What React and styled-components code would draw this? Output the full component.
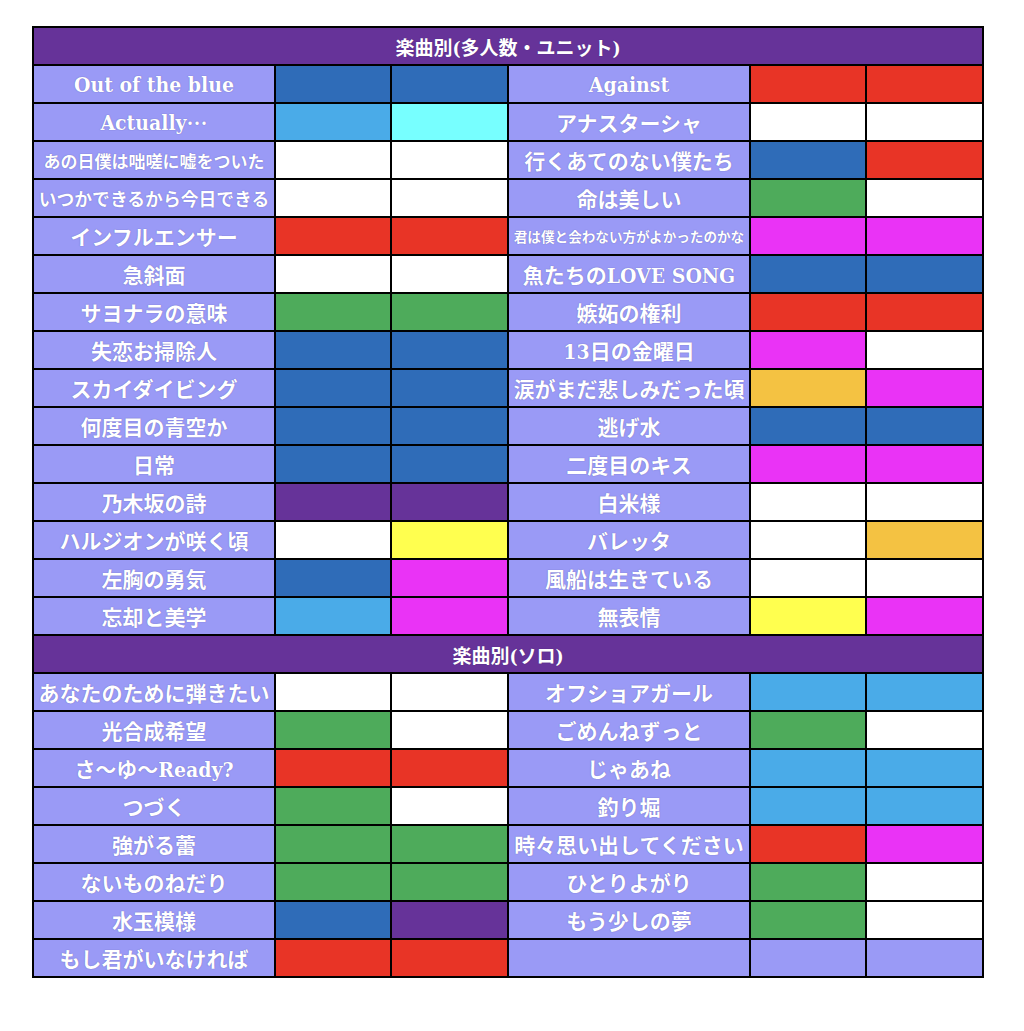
import React from 'react'
import styled, { createGlobalStyle } from 'styled-components'

const GlobalStyle = createGlobalStyle`
  body {
    margin: 0;
    background: #fff;
  }
`

const C = {
  blue: '#2f6cb8',
  sky: '#4aabe8',
  cyan: '#77ffff',
  red: '#e83426',
  green: '#4eab5b',
  pink: '#ea33f6',
  purple: '#663399',
  yellow: '#ffff4f',
  orange: '#f4c242',
  white: '#ffffff',
  lav: '#9a9af6',
}

const Page = styled.div`
  padding: 26px 0 0 32px;
`

const Sheet = styled.div`
  display: grid;
  grid-template-columns: 240px 114px 115px 240px 114px 115px;
  grid-auto-rows: 36px;
  gap: 2px;
  padding: 2px;
  width: max-content;
  background: #000;
  font-family: "DejaVu Serif Condensed", "DejaVu Serif", "Noto Sans CJK JP", serif;
  font-weight: 700;
  color: #fff;
`

const SectionHeader = styled.div`
  grid-column: 1 / -1;
  background: ${C.purple};
  display: flex;
  align-items: center;
  justify-content: center;
  font-size: 19px;
  text-shadow: 0 0 1px rgba(40, 20, 80, 0.6);
`

const NameCell = styled.div`
  background: ${C.lav};
  display: flex;
  align-items: center;
  justify-content: center;
  white-space: nowrap;
  overflow: hidden;
  font-size: ${p => p.$size || 21}px;
  text-shadow: 0 0 1px rgba(60, 60, 140, 0.7);
`

// japanese-style centred dots
const Dots = styled.span`
  font-family: "Noto Sans CJK JP", sans-serif;
`

const ColorCell = styled.div`
  background: ${p => p.$color};
`

const units = [
  [['Out of the blue', 'blue', 'blue'], ['Against', 'red', 'red']],
  [[<>Actually<Dots>…</Dots></>, 'sky', 'cyan'], ['アナスターシャ', 'white', 'white']],
  [['あの日僕は咄嗟に嘘をついた', 'white', 'white', 17], ['行くあてのない僕たち', 'blue', 'red']],
  [['いつかできるから今日できる', 'white', 'white', 17.8], ['命は美しい', 'green', 'white']],
  [['インフルエンサー', 'red', 'red'], ['君は僕と会わない方がよかったのかな', 'pink', 'pink', 13.6]],
  [['急斜面', 'white', 'white'], ['魚たちのLOVE SONG', 'blue', 'blue']],
  [['サヨナラの意味', 'green', 'green'], ['嫉妬の権利', 'red', 'red']],
  [['失恋お掃除人', 'blue', 'blue'], ['13日の金曜日', 'pink', 'white']],
  [['スカイダイビング', 'blue', 'blue'], ['涙がまだ悲しみだった頃', 'orange', 'pink']],
  [['何度目の青空か', 'blue', 'blue'], ['逃げ水', 'blue', 'blue']],
  [['日常', 'blue', 'blue'], ['二度目のキス', 'pink', 'pink']],
  [['乃木坂の詩', 'purple', 'purple'], ['白米様', 'white', 'white']],
  [['ハルジオンが咲く頃', 'white', 'yellow'], ['バレッタ', 'white', 'orange']],
  [['左胸の勇気', 'blue', 'pink'], ['風船は生きている', 'white', 'white']],
  [['忘却と美学', 'sky', 'pink'], ['無表情', 'yellow', 'pink']],
]

const solos = [
  [['あなたのために弾きたい', 'white', 'white'], ['オフショアガール', 'sky', 'sky']],
  [['光合成希望', 'green', 'white'], ['ごめんねずっと', 'green', 'white']],
  [['さ～ゆ～Ready?', 'red', 'red'], ['じゃあね', 'sky', 'sky']],
  [['つづく', 'green', 'white'], ['釣り堀', 'sky', 'sky']],
  [['強がる蕾', 'green', 'green'], ['時々思い出してください', 'red', 'pink']],
  [['ないものねだり', 'green', 'green'], ['ひとりよがり', 'green', 'white']],
  [['水玉模様', 'blue', 'purple'], ['もう少しの夢', 'green', 'white']],
  [['もし君がいなければ', 'red', 'red'], ['', 'lav', 'lav']],
]

const renderRows = (rows, key) =>
  rows.flatMap((pair, i) =>
    pair.flatMap(([name, a, b, size], j) => [
      <NameCell key={`${key}-${i}-${j}-n`} $size={size}>{name}</NameCell>,
      <ColorCell key={`${key}-${i}-${j}-a`} $color={C[a]} />,
      <ColorCell key={`${key}-${i}-${j}-b`} $color={C[b]} />,
    ])
  )

const App = () => {
  return (
    <Page>
      <GlobalStyle />
      <Sheet>
        <SectionHeader>楽曲別(多人数・ユニット)</SectionHeader>
        {renderRows(units, 'u')}
        <SectionHeader>楽曲別(ソロ)</SectionHeader>
        {renderRows(solos, 's')}
      </Sheet>
    </Page>
  )
}

export default App
